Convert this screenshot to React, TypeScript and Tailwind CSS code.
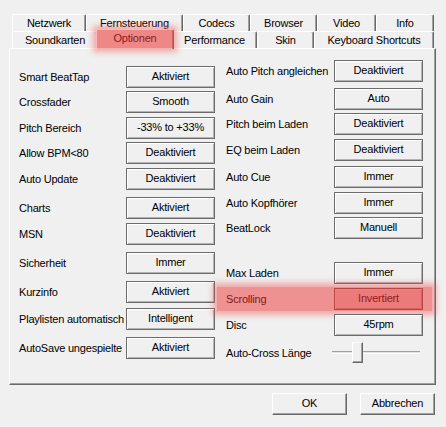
import React from "react";

const font = { fontFamily: '"Liberation Sans", Arial, sans-serif' };

type TabDef = { label: string; w: string; selected?: boolean };

const row1: TabDef[] = [
  { label: "Netzwerk", w: "w-[74px]" },
  { label: "Fernsteuerung", w: "w-[97px]" },
  { label: "Codecs", w: "w-[67px]" },
  { label: "Browser", w: "w-[67px]" },
  { label: "Video", w: "w-[59px]" },
  { label: "Info", w: "w-[58px]" },
];

const row2: TabDef[] = [
  { label: "Soundkarten", w: "w-[86px]" },
  { label: "Optionen", w: "w-[78px]", selected: true },
  { label: "Performance", w: "w-[85px]" },
  { label: "Skin", w: "w-[57px]" },
  { label: "Keyboard Shortcuts", w: "w-[120px]" },
];

function Tab({ t }: { t: TabDef }) {
  if (t.selected) {
    return (
      <div
        className={`${t.w} relative z-10 -mx-[2px] -mt-[2px] h-[20px] shrink-0 rounded-t-[2px] border-l border-t border-r border-l-white border-t-white border-r-[#696969] bg-[#f0f0f0] text-center text-[11px] tracking-[-0.2px] leading-[17px] text-black shadow-[inset_-1px_0_0_#a0a0a0]`}
      >
        {t.label}
        <div className="pointer-events-none absolute inset-x-0 top-0 bottom-[1px] bg-[rgba(240,50,50,0.55)] shadow-[0_0_6px_4px_rgba(240,80,80,0.45)]" />
      </div>
    );
  }
  return (
    <div
      className={`${t.w} h-[17px] shrink-0 rounded-t-[2px] border-l border-t border-r border-l-white border-t-white border-r-[#696969] bg-[#f0f0f0] text-center text-[11px] tracking-[-0.2px] leading-[16px] text-black shadow-[inset_-1px_0_0_#a0a0a0]`}
    >
      {t.label}
    </div>
  );
}

type Row = { label: string; value?: string; mt: string; highlight?: boolean; slider?: boolean };

const leftRows: Row[] = [
  { label: "Smart BeatTap", value: "Aktiviert", mt: "mt-[17px]" },
  { label: "Crossfader", value: "Smooth", mt: "mt-[3px]" },
  { label: "Pitch Bereich", value: "-33% to +33%", mt: "mt-[4px]" },
  { label: "Allow BPM<80", value: "Deaktiviert", mt: "mt-[3px]" },
  { label: "Auto Update", value: "Deaktiviert", mt: "mt-[4px]" },
  { label: "Charts", value: "Aktiviert", mt: "mt-[7px]" },
  { label: "MSN", value: "Deaktiviert", mt: "mt-[4px]" },
  { label: "Sicherheit", value: "Immer", mt: "mt-[7px]" },
  { label: "Kurzinfo", value: "Aktiviert", mt: "mt-[7px]" },
  { label: "Playlisten automatisch", value: "Intelligent", mt: "mt-[5px]" },
  { label: "AutoSave ungespielte", value: "Aktiviert", mt: "mt-[7px]" },
];

const rightRows: Row[] = [
  { label: "Auto Pitch angleichen", value: "Deaktiviert", mt: "mt-[11px]" },
  { label: "Auto Gain", value: "Auto", mt: "mt-[6px]" },
  { label: "Pitch beim Laden", value: "Deaktiviert", mt: "mt-[3px]" },
  { label: "EQ beim Laden", value: "Deaktiviert", mt: "mt-[4px]" },
  { label: "Auto Cue", value: "Immer", mt: "mt-[5px]" },
  { label: "Auto Kopfhörer", value: "Immer", mt: "mt-[4px]" },
  { label: "BeatLock", value: "Manuell", mt: "mt-[3px]" },
  { label: "Max Laden", value: "Immer", mt: "mt-[23px]" },
  { label: "Scrolling", value: "Invertiert", mt: "mt-[4px]", highlight: true },
  { label: "Disc", value: "45rpm", mt: "mt-[4px]" },
  { label: "Auto-Cross Länge", mt: "mt-[6px]", slider: true },
];

function ValueButton({ value, highlight }: { value: string; highlight?: boolean }) {
  return (
    <div className="relative h-[22px] w-[89px] shrink-0 border border-[#6c6c6c] bg-[#f0f0f0] text-center text-[11px] tracking-[-0.2px] leading-[18px] text-black shadow-[inset_1px_1px_0_#ffffff,inset_-1px_-1px_0_#b4b4b4]">
      {value}
      {highlight && (
        <div className="pointer-events-none absolute -inset-[1px] bg-[rgba(200,30,30,0.22)]" />
      )}
    </div>
  );
}

function Slider() {
  return (
    <div className="relative -ml-[2px] h-[21px] w-[89px] shrink-0">
      <div className="absolute left-0 top-[9px] h-[3px] w-[88px] border-t border-b border-t-[#a0a0a0] border-b-white bg-[#e3e3e3]" />
      <div className="absolute left-[20px] top-0 h-[21px] w-[11px] border border-l-white border-t-white border-r-[#696969] border-b-[#696969] bg-[#f0f0f0] shadow-[inset_-1px_-1px_0_#a0a0a0]" />
    </div>
  );
}

function RowView({ r, labelW }: { r: Row; labelW: string }) {
  return (
    <div className={`${r.mt} relative flex items-center ${r.slider ? "h-[21px]" : "h-[22px]"}`}>
      <div className={`${labelW} shrink-0 whitespace-nowrap text-[11px] tracking-[-0.2px] leading-[14px] text-black`}>{r.label}</div>
      {r.slider ? <Slider /> : <ValueButton value={r.value ?? ""} highlight={r.highlight} />}
      {r.highlight && (
        <div className="pointer-events-none absolute -left-[9px] -right-[9px] -top-[1px] -bottom-[1px] bg-[rgba(240,50,50,0.5)] shadow-[0_0_6px_4px_rgba(240,80,80,0.45)]" />
      )}
    </div>
  );
}

function ClassicButton({ label }: { label: string }) {
  return (
    <div className="h-[22px] w-[75px] border border-l-white border-t-white border-r-[#696969] border-b-[#696969] bg-[#f0f0f0] text-center text-[11px] tracking-[-0.2px] leading-[19px] text-black shadow-[inset_-1px_-1px_0_#a0a0a0]">
      {label}
    </div>
  );
}

export default function App() {
  return (
    <div className="h-[427px] w-[446px] overflow-hidden bg-[#f0f0f0] pt-[14px]" style={font}>
      <div className="ml-[12px] flex w-[422px]">
        {row1.map((t) => (
          <Tab key={t.label} t={t} />
        ))}
      </div>
      <div className="relative ml-[12px] flex h-[17px] w-[422px] items-start">
        {row2.map((t) => (
          <Tab key={t.label} t={t} />
        ))}
      </div>
      <div className="ml-[9px] flex h-[337px] w-[427px] border border-l-white border-t-white border-r-[#696969] border-b-[#696969] shadow-[inset_-1px_-1px_0_#a0a0a0]">
        <div className="flex w-[205px] flex-col pl-[9px]">
          {leftRows.map((r) => (
            <RowView key={r.label} r={r} labelW="w-[107px]" />
          ))}
        </div>
        <div className="ml-[11px] flex w-[197px] flex-col">
          {rightRows.map((r) => (
            <RowView key={r.label} r={r} labelW="w-[108px]" />
          ))}
        </div>
      </div>
      <div className="mt-[8px] flex justify-end gap-[13px] pr-[11px]">
        <ClassicButton label="OK" />
        <ClassicButton label="Abbrechen" />
      </div>
    </div>
  );
}
